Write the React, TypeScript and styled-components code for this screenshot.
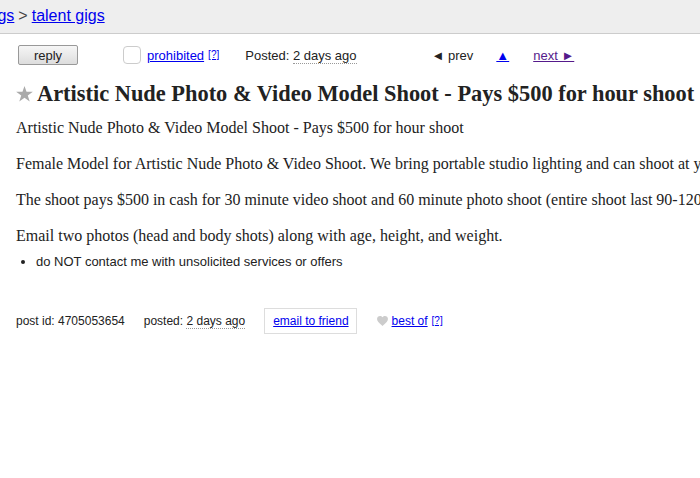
import React from "react";
import styled, { createGlobalStyle } from "styled-components";

const Global = createGlobalStyle`
  html, body { margin: 0; padding: 0; background: #fff; overflow: hidden; }
  body { font-family: "Liberation Sans", Arial, sans-serif; color: #222; width: 700px; }
`;

const Header = styled.header`
  height: 33px;
  background: #eeeeee;
  border-bottom: 1px solid #cccccc;
  display: flex;
  align-items: center;
  overflow: hidden;
  font-size: 16px;
  white-space: nowrap;
`;

const Crumbs = styled.div`
  margin-left: -15px;
  margin-top: -2px;
  display: flex;
  gap: 4px;
  color: #444;
`;

const Link = styled.a<{ $visited?: boolean }>`
  color: ${(p) => (p.$visited ? "#551a8b" : "#0000ee")};
  text-decoration: underline;
  cursor: pointer;
`;

const Toolbar = styled.div`
  display: flex;
  align-items: center;
  height: 20px;
  margin: 11px 0 0 18px;
  font-size: 13px;
  white-space: nowrap;
`;

const ReplyButton = styled.button`
  width: 60px;
  height: 20px;
  padding: 0;
  border: 1px solid #999;
  border-radius: 2px;
  background: linear-gradient(#f6f6f6, #dddddd);
  font-family: inherit;
  font-size: 13px;
  color: #222;
`;

const Checkbox = styled.span`
  width: 16px;
  height: 16px;
  border: 1px solid #ccc;
  border-radius: 4px;
  margin-left: 45px;
  margin-right: 6px;
  background: #fff;
`;

const Sup = styled.sup`
  font-size: 10px;
  margin-left: 4px;
  vertical-align: 7px;
  line-height: 0;
  color: #0000ee;
  text-decoration: underline;
`;

const Dotted = styled.span`
  border-bottom: 1px dotted #999;
`;

const Plain = styled.span<{ $ml?: number }>`
  margin-left: ${(p) => p.$ml ?? 0}px;
  color: #222;
`;

const NavItem = styled.span<{ $ml: number }>`
  margin-left: ${(p) => p.$ml}px;
`;

const Title = styled.h1`
  margin: 17px 0 0 16px;
  display: flex;
  align-items: center;
  gap: 4px;
  white-space: nowrap;
  font-family: "Liberation Serif", "Times New Roman", serif;
  font-size: 22.4px;
  font-weight: bold;
  color: #222;
  line-height: 24px;
`;

const Body = styled.section`
  margin: 13px 0 0 16px;
  font-family: "Liberation Serif", "Times New Roman", serif;
  font-size: 16px;
  line-height: 18px;
  color: #222;
  white-space: nowrap;
`;

const Para = styled.p`
  margin: 0 0 18px;
`;

const List = styled.ul`
  margin: -9px 0 0;
  padding-left: 20px;
  font-family: "Liberation Sans", Arial, sans-serif;
  font-size: 13px;
  line-height: 16px;
`;

const Footer = styled.div`
  display: flex;
  align-items: center;
  margin: 38px 0 0 16px;
  font-size: 12px;
  white-space: nowrap;
  color: #222;
`;

const EmailBox = styled.span`
  margin-left: 19px;
  border: 1px solid #ddd;
  padding: 5px 7px 5px 8px;
`;

const Heart = styled.span`
  margin-left: 20px;
  margin-right: 4px;
  display: inline-flex;
`;

export default function App() {
  return (
    <>
      <Global />
      <Header>
        <Crumbs>
          <Link>gigs</Link>
          <span>&gt;</span>
          <Link>talent gigs</Link>
        </Crumbs>
      </Header>
      <Toolbar>
        <ReplyButton>reply</ReplyButton>
        <Checkbox />
        <Link>prohibited</Link>
        <Sup>[?]</Sup>
        <Plain $ml={26}>
          Posted: <Dotted>2 days ago</Dotted>
        </Plain>
        <NavItem $ml={75}>
          <Plain>&#9668; prev</Plain>
        </NavItem>
        <NavItem $ml={23}>
          <Link>&#9650;</Link>
        </NavItem>
        <NavItem $ml={24}>
          <Link $visited>next &#9658;</Link>
        </NavItem>
      </Toolbar>
      <Title>
        <svg width="17" height="16" viewBox="0 0 24 23" aria-hidden>
          <path
            d="M12 0l2.9 8.3H24l-7.3 5.4 2.8 8.7L12 17l-7.5 5.4 2.8-8.7L0 8.3h9.1z"
            fill="#aaa"
          />
        </svg>
        <span>Artistic Nude Photo &amp; Video Model Shoot - Pays $500 for hour shoot</span>
      </Title>
      <Body>
        <Para>Artistic Nude Photo &amp; Video Model Shoot - Pays $500 for hour shoot</Para>
        <Para>
          Female Model for Artistic Nude Photo &amp; Video Shoot. We bring portable studio lighting and can shoot at your location.
        </Para>
        <Para>
          The shoot pays $500 in cash for 30 minute video shoot and 60 minute photo shoot (entire shoot last 90-120 minutes).
        </Para>
        <Para>Email two photos (head and body shots) along with age, height, and weight.</Para>
        <List>
          <li>do NOT contact me with unsolicited services or offers</li>
        </List>
      </Body>
      <Footer>
        <span>post id: 4705053654</span>
        <Plain $ml={19}>
          posted: <Dotted>2 days ago</Dotted>
        </Plain>
        <EmailBox>
          <Link>email to friend</Link>
        </EmailBox>
        <Heart>
          <svg width="11" height="10" viewBox="0 0 24 22" aria-hidden>
            <path
              d="M12 22L10.3 20.4C4.1 14.9 0 11.2 0 6.6 0 2.9 2.9 0 6.6 0c2.1 0 4.1 1 5.4 2.5C13.3 1 15.3 0 17.4 0 21.1 0 24 2.9 24 6.6c0 4.6-4.1 8.3-10.3 13.8z"
              fill="#ccc"
            />
          </svg>
        </Heart>
        <Link>best of</Link>
        <Sup>[?]</Sup>
      </Footer>
    </>
  );
}
